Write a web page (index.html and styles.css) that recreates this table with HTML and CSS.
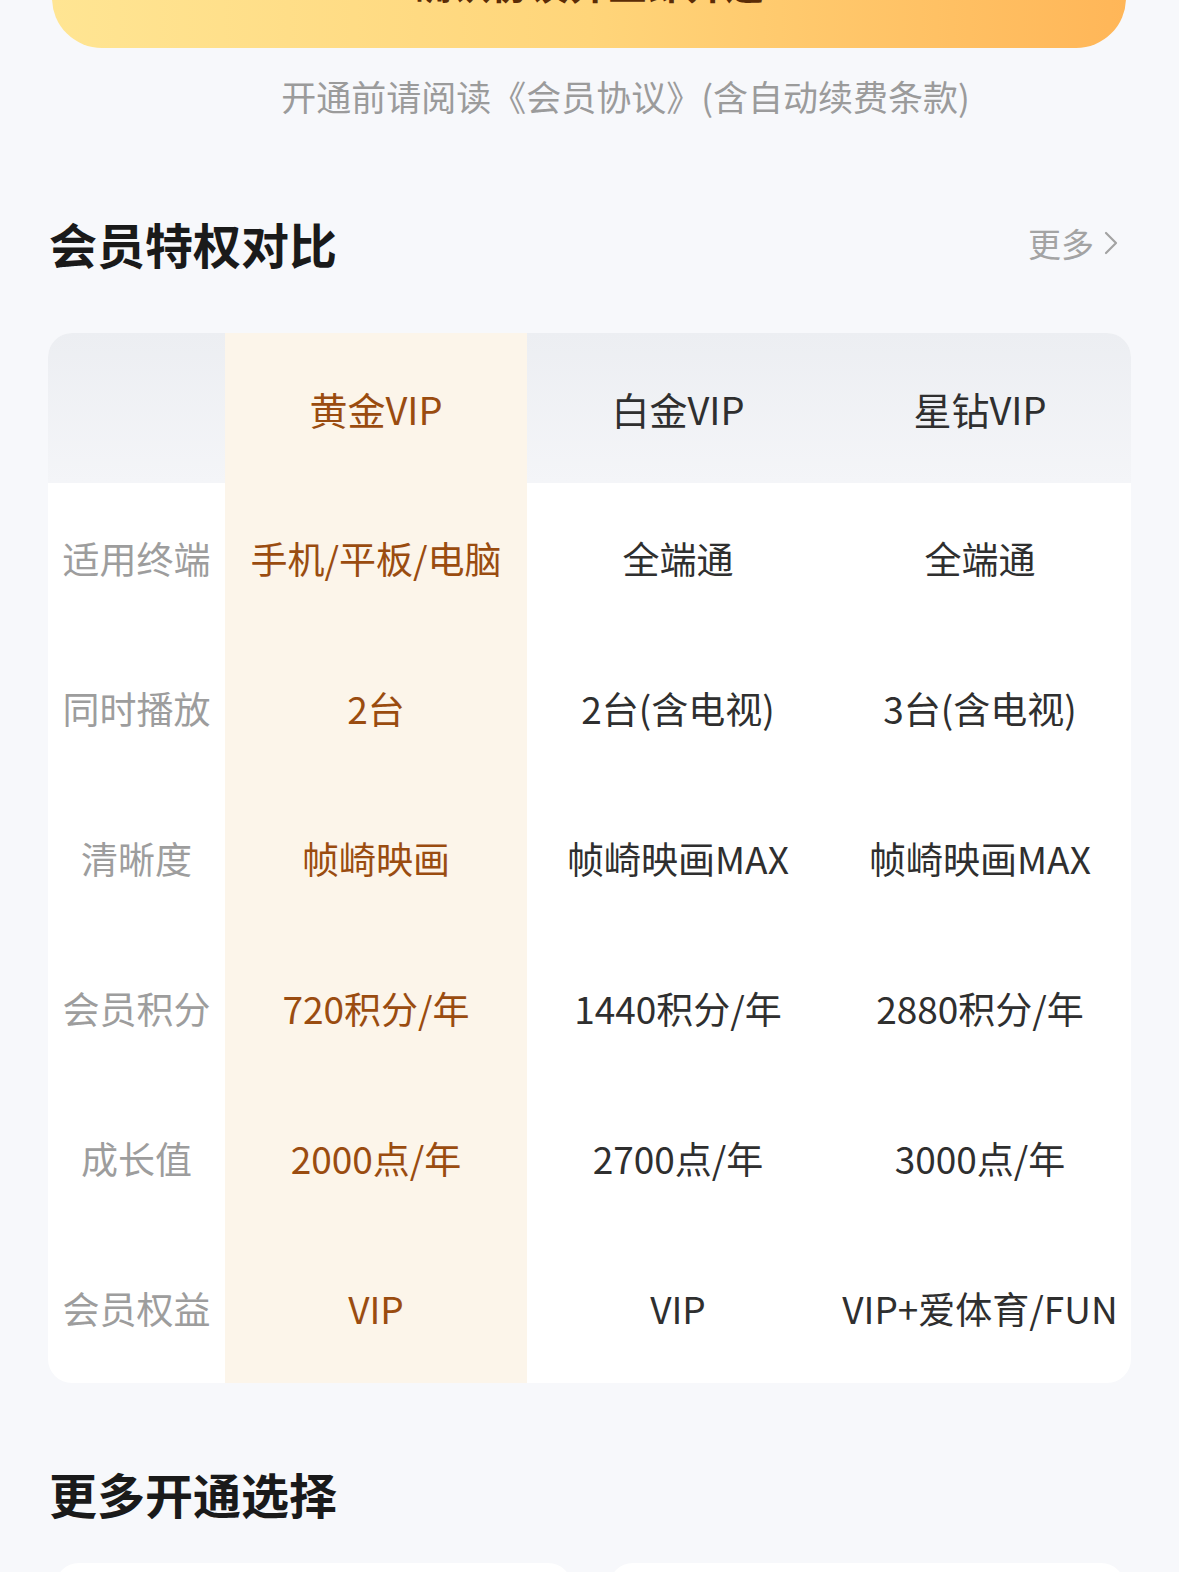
FILE: index.html
```html
<!DOCTYPE html>
<html lang="zh-CN">
<head>
<meta charset="utf-8">
<title>会员特权对比</title>
<link rel="stylesheet" href="styles.css">
</head>
<body>
<div class="page">
  <div class="pay-btn"><span class="pay-text">确认协议并立即开通</span></div>
  <p class="agree">开通前请阅读《会员协议》(含自动续费条款)</p>

  <div class="section-head">
    <h2 class="section-title">会员特权对比</h2>
    <a class="more">更多<svg class="chev" viewBox="0 0 14 24" width="14" height="24"><path d="M2 2 L12 12 L2 22" fill="none" stroke="#a3a3a3" stroke-width="2.2" stroke-linecap="round" stroke-linejoin="round"/></svg></a>
  </div>

  <div class="compare">
    <div class="cell head"></div>
    <div class="cell head gold">黄金VIP</div>
    <div class="cell head dark">白金VIP</div>
    <div class="cell head dark">星钻VIP</div>

    <div class="cell label">适用终端</div>
    <div class="cell gold">手机/平板/电脑</div>
    <div class="cell dark">全端通</div>
    <div class="cell dark">全端通</div>

    <div class="cell label">同时播放</div>
    <div class="cell gold">2台</div>
    <div class="cell dark">2台(含电视)</div>
    <div class="cell dark">3台(含电视)</div>

    <div class="cell label">清晰度</div>
    <div class="cell gold">帧崎映画</div>
    <div class="cell dark">帧崎映画MAX</div>
    <div class="cell dark">帧崎映画MAX</div>

    <div class="cell label">会员积分</div>
    <div class="cell gold">720积分/年</div>
    <div class="cell dark">1440积分/年</div>
    <div class="cell dark">2880积分/年</div>

    <div class="cell label">成长值</div>
    <div class="cell gold">2000点/年</div>
    <div class="cell dark">2700点/年</div>
    <div class="cell dark">3000点/年</div>

    <div class="cell label">会员权益</div>
    <div class="cell gold">VIP</div>
    <div class="cell dark">VIP</div>
    <div class="cell dark">VIP+爱体育/FUN</div>
  </div>

  <h2 class="section-title more-title">更多开通选择</h2>

  <div class="options">
    <div class="opt-card"></div>
    <div class="opt-card"></div>
  </div>
</div>
</body>
</html>
```

FILE: styles.css
```css
html, body {
  margin: 0;
  padding: 0;
  background: #f7f8fb;
}
body {
  font-family: "Noto Sans CJK SC", "Noto Sans", sans-serif;
  width: 1179px;
  height: 1572px;
  overflow: hidden;
}
.page {
  display: flex;
  flex-direction: column;
}
.pay-btn {
  height: 100px;
  margin: -52px 53px 0 52px;
  border-radius: 50px;
  background: linear-gradient(90deg, #ffe593 0%, #ffd57a 50%, #ffb658 100%);
  display: flex;
  justify-content: center;
  align-items: flex-start;
  padding-top: 16px;
  box-sizing: border-box;
}
.pay-text {
  font-size: 38px;
  line-height: 38px;
  font-weight: 700;
  color: #5b2c06;
  letter-spacing: 1px;
}
.agree {
  margin: 24px 0 0;
  padding-left: 72px;
  text-align: center;
  font-size: 35px;
  line-height: 48px;
  color: #9b9b9b;
}
.section-head {
  margin-top: 93px;
  padding: 0 61px 0 49px;
  display: flex;
  justify-content: space-between;
  align-items: center;
  height: 60px;
}
.section-title {
  margin: 0;
  font-size: 48px;
  line-height: 60px;
  font-weight: 700;
  color: #1a1a1a;
}
.more {
  display: flex;
  align-items: center;
  gap: 10px;
  font-size: 33px;
  color: #a3a3a3;
}
.chev {
  display: block;
}
.compare {
  margin: 60px 48px 0 48px;
  display: grid;
  grid-template-columns: 177px repeat(3, 1fr);
  grid-auto-rows: 150px;
  background: #ffffff;
  border-radius: 24px;
  overflow: hidden;
}
.cell {
  display: flex;
  align-items: center;
  justify-content: center;
  font-size: 37px;
  white-space: nowrap;
}
.cell.head {
  background: linear-gradient(180deg, #eceef2 0%, #f4f5f8 100%);
  font-size: 38px;
}
.cell.gold,
.cell.head.gold {
  background: #fcf5ea;
  color: #9a4c10;
}
.cell.dark {
  color: #2f2f2f;
}
.cell.label {
  color: #9d9d9d;
  font-size: 37px;
}
.more-title {
  margin: 80px 0 0 49px;
}
.options {
  margin: 40px 54px 0 55px;
  display: grid;
  grid-template-columns: 1fr 1fr;
  gap: 37px;
}
.opt-card {
  height: 200px;
  background: #ffffff;
  border-radius: 24px;
}
```
